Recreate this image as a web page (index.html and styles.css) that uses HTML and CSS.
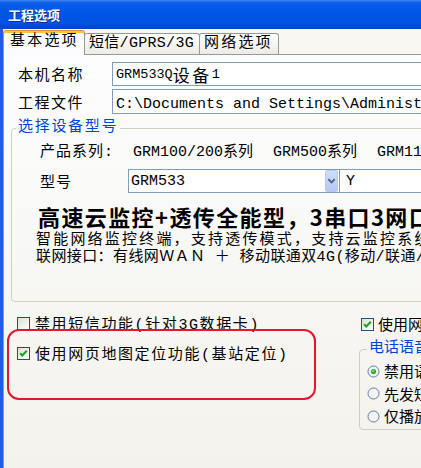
FILE: index.html
```html
<!DOCTYPE html>
<html lang="zh-CN">
<head>
<meta charset="utf-8">
<title>工程选项</title>
<link rel="stylesheet" href="styles.css">
</head>
<body>
<div class="window">
  <div class="titlebar"><span class="title">工程选项</span></div>
  <div class="client">
    <div class="tabs">
      <div class="tab active">基本选项</div>
      <div class="tab t2">短信/GPRS/3G</div>
      <div class="tab t3">网络选项</div>
    </div>
    <div class="panel">
      <div class="row r1">
        <span class="label">本机名称</span>
        <div class="edit name">GRM533Q<span class="cjk">设备</span>1</div>
      </div>
      <div class="row r2">
        <span class="label">工程文件</span>
        <div class="edit path">C:\Documents and Settings\Administrator\桌面\GRM533Q.GRM</div>
      </div>
      <fieldset class="group device">
        <legend>选择设备型号</legend>
        <div class="gbody">
          <div class="series">
            <span class="flabel">产品系列:</span>
            <span class="opt">GRM100/200系列</span>
            <span class="opt">GRM500系列</span>
            <span class="opt">GRM110系列</span>
          </div>
          <div class="model">
            <span class="flabel2">型号</span>
            <div class="combo">
              <span class="val">GRM533</span>
              <span class="drop"><svg width="12" height="20" viewBox="0 0 12 20"><path d="M2.5 8 L6 11.5 L9.5 8" fill="none" stroke="#4D6185" stroke-width="2"/></svg></span>
            </div>
            <div class="edit sub">Y</div>
          </div>
          <div class="headline">高速云监控+透传全能型，3串口3网口</div>
          <div class="desc d1">智能网络监控终端，支持透传模式，支持云监控系统</div>
          <div class="desc d2">联网接口：有线网ＷＡＮ ＋ 移动联通双4G(移动/联通/电信)</div>
        </div>
      </fieldset>
      <div class="bottom">
        <div class="leftcol">
          <div class="check">
            <span class="box"></span>
            <span>禁用短信功能(针对3G数据卡)</span>
          </div>
          <div class="check c2">
            <span class="box"><svg width="11" height="11" viewBox="0 0 11 11"><path d="M2.2 5.2 L4.3 7.4 L8.8 2.8" fill="none" stroke="#21A121" stroke-width="2.2"/></svg></span>
            <span>使用网页地图定位功能(基站定位)</span>
          </div>
        </div>
        <div class="rightcol">
          <div class="check rc">
            <span class="box"><svg width="11" height="11" viewBox="0 0 11 11"><path d="M2.2 5.2 L4.3 7.4 L8.8 2.8" fill="none" stroke="#21A121" stroke-width="2.2"/></svg></span>
            <span>使用网络语音对讲</span>
          </div>
          <fieldset class="group voice">
            <legend>电话语音</legend>
            <div class="radio">
              <span class="rb"><svg width="13" height="13" viewBox="0 0 13 13"><circle cx="6.5" cy="6.5" r="5.5" fill="#F4F4F0" stroke="#5D7EA8"/><circle cx="6.5" cy="6.5" r="2.6" fill="#2DB22D"/><circle cx="6" cy="6" r="1" fill="#8EE08E"/></svg></span>
              <span>禁用语音</span>
            </div>
            <div class="radio">
              <span class="rb"><svg width="13" height="13" viewBox="0 0 13 13"><circle cx="6.5" cy="6.5" r="5.5" fill="#F4F4F0" stroke="#5D7EA8"/></svg></span>
              <span>先发短信</span>
            </div>
            <div class="radio">
              <span class="rb"><svg width="13" height="13" viewBox="0 0 13 13"><circle cx="6.5" cy="6.5" r="5.5" fill="#F4F4F0" stroke="#5D7EA8"/></svg></span>
              <span>仅播放</span>
            </div>
          </fieldset>
        </div>
      </div>
      <div class="highlight"></div>
    </div>
  </div>
</div>
</body>
</html>
```
FILE: styles.css
```css
* { box-sizing: border-box; }
html, body { margin: 0; padding: 0; }
body {
  width: 421px;
  height: 468px;
  overflow: hidden;
  font-family: "Liberation Mono", "Noto Sans CJK SC", monospace;
  font-size: 15px;
  color: #000;
  background: #F4F3EE;
}
.window { width: 421px; height: 468px; display: flex; flex-direction: column; }

.titlebar {
  height: 29px;
  flex: none;
  display: flex;
  align-items: center;
  padding-left: 8px;
  background: linear-gradient(#3C86F2 0, #0A5EEA 3px, #0055E6 45%, #0153E2 80%, #0044C8 100%);
}
.title {
  font-family: "Noto Sans CJK SC", sans-serif;
  font-weight: bold;
  font-size: 13px;
  line-height: 16px;
  color: #fff;
  text-shadow: 1px 1px 0 #0A2F8C;
}

.client {
  flex: 1;
  min-height: 0;
  display: flex;
  flex-direction: column;
  border-left: 3px solid #1E5FE2;
  background: #F8F7F2;
}

.tabs {
  height: 25px;
  flex: none;
  display: flex;
  align-items: flex-end;
  position: relative;
  z-index: 1;
}
.tab {
  height: 21px;
  border: 1px solid #919B9C;
  border-bottom: none;
  border-radius: 3px 3px 0 0;
  background: linear-gradient(#FFFFFF, #ECEBE5);
  padding-left: 4px;
  line-height: 20px;
  letter-spacing: 2.2px;
  white-space: nowrap;
  margin-left: -1px;
}
.tab.active {
  width: 82px;
  height: 25px;
  margin-left: 0;
  margin-bottom: -1px;
  padding-left: 6px;
  line-height: 22px;
  border-top: 1px solid #E68B2C;
  box-shadow: inset 0 2px 0 #FFC83C;
  background: #FCFCFE;
}
.tab.t2 { width: 116px; padding-left: 4px; letter-spacing: 0.3px; }
.tab.t3 { width: 80px; padding-left: 4px; }

.panel {
  flex: 1;
  position: relative;
  overflow: hidden;
  border-top: 1px solid #919B9C;
  border-left: 1px solid #919B9C;
  background: linear-gradient(#FDFDFE, #F3F2EC);
}

.row { display: flex; align-items: center; padding-left: 14px; }
.r1 { margin-top: 7px; height: 24px; }
.r2 { margin-top: 3px; height: 25px; }
.label { width: 94px; flex: none; letter-spacing: 1.5px; white-space: nowrap; }
.edit {
  flex: 1;
  height: 100%;
  background: #fff;
  border: 1px solid #7F9DB9;
  border-right: none;
  padding-left: 3px;
  white-space: nowrap;
  overflow: hidden;
  display: flex;
  align-items: center;
}
.name { font-size: 13.5px; }
.name .cjk { font-size: 17px; letter-spacing: 2.5px; }

.group {
  margin: 0;
  border: 1px solid #D0D0BF;
  border-radius: 4px;
  min-width: 0;
}
.group legend {
  padding: 0 2px;
  line-height: 18px;
  color: #0046D5;
  white-space: nowrap;
}
.device {
  margin: 5px 0 0 7px;
  width: 600px;
  padding: 0 0 35px 4px;
}
.device legend { letter-spacing: 1.7px; }
.gbody { padding-left: 24px; white-space: nowrap; }

.series { display: flex; align-items: center; height: 22px; margin-top: 2px; }
.flabel { width: 93px; flex: none; letter-spacing: 1px; }
.opt { margin-right: 20px; }

.model { display: flex; align-items: center; height: 24px; margin-top: 8px; }
.flabel2 { width: 88px; flex: none; letter-spacing: 1px; }
.combo {
  width: 211px;
  height: 24px;
  flex: none;
  background: #fff;
  border: 1px solid #7F9DB9;
  border-right: none;
  display: flex;
  align-items: center;
  padding-left: 2px;
}
.combo .val { flex: 1; }
.drop {
  width: 13px;
  height: 22px;
  margin-right: 1px;
  border: 1px solid #B6C9F4;
  border-radius: 2px;
  background: linear-gradient(#D0DEFD, #B3C8F6);
  display: flex;
  align-items: center;
  justify-content: center;
}
.sub { flex: none; width: 200px; padding-left: 6px; }

.headline {
  margin: 10px 0 0 -2px;
  font-size: 22px;
  font-weight: bold;
  line-height: 26px;
  letter-spacing: 1.4px;
  font-family: "Noto Sans CJK SC", sans-serif;
}
.desc { margin-left: -4px; line-height: 17px; }
.d1 { margin-top: 3px; letter-spacing: 2.2px; }
.d2 { letter-spacing: 0.4px; }

.bottom { display: flex; margin-top: 11px; white-space: nowrap; }
.leftcol { width: 357px; flex: none; padding-left: 13px; }
.rightcol { width: 300px; flex: none; }

.check { display: flex; align-items: center; height: 20px; gap: 5px; letter-spacing: 1.6px; }
.check.c2 { margin-top: 10px; }
.check.rc { margin-top: 1px; gap: 4px; letter-spacing: 0; }
.box {
  width: 13px;
  height: 13px;
  flex: none;
  border: 1px solid #1C5180;
  background: linear-gradient(135deg, #DCDCD7, #FFFFFF);
  display: flex;
  align-items: center;
  justify-content: center;
}

.voice {
  margin: 6px 0 0 -2px;
  width: 200px;
  padding: 0 0 1px 7px;
}
.radio { display: flex; align-items: center; height: 22.5px; gap: 4px; }
.radio:first-of-type { margin-top: 2px; }
.rb { width: 13px; height: 13px; flex: none; display: flex; }

.highlight {
  position: absolute;
  left: 3px;
  top: 274px;
  width: 309px;
  height: 71px;
  border: 2px solid #E0182A;
  border-radius: 12px;
}
```
